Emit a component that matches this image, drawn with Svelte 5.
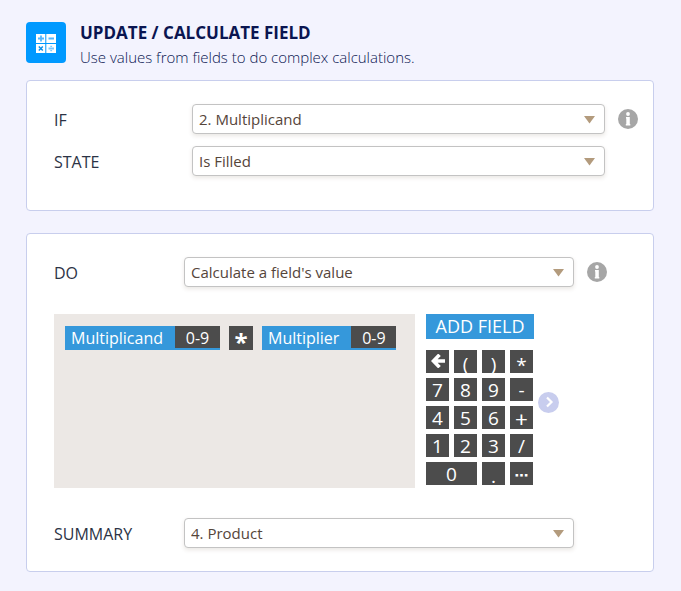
<script>
  let field = $state('2. Multiplicand');
  let condition = $state('Is Filled');
  let action = $state("Calculate a field's value");
  let result = $state('4. Product');

  const keys = ['back', '(', ')', '*', '7', '8', '9', '-', '4', '5', '6', '+', '1', '2', '3', '/', '0', '.', '⋯'];
  const low = ['(', ')', '.'];
</script>

{#snippet caret()}
  <svg class="caret" viewBox="0 0 11 8" aria-hidden="true"><path d="M0 0H11L5.500 7.500Z" /></svg>
{/snippet}

{#snippet info()}
  <button class="info" type="button" aria-label="More information">
    <svg viewBox="0 0 20 20" aria-hidden="true">
      <circle cx="10" cy="10" r="10" fill="#a6a6a6" />
      <circle cx="10" cy="5" r="1.900" fill="#fff" />
      <path d="M8 8h3.800v7H12.300v1.600H7.800V15H8.300V9.500H8z" fill="#fff" />
    </svg>
  </button>
{/snippet}

<main>
  <header>
    <div class="logo">
      <svg viewBox="0 0 20 20" aria-hidden="true">
        <path d="M0 1H9.300V10H0ZM10.300 1H20V10H10.300ZM0 11H9.300V20H0ZM10.300 11H20V20H10.300Z" fill="#fff" />
        <path d="M2 5.500H8M5 2.500V8.500M12.500 5.500H18" stroke="#55b8ff" stroke-width="1.800" />
        <path d="M12.500 15.500H18M15.200 12.700V14M15.200 17V18.300" stroke="#7cc9ff" stroke-width="1.800" />
        <path d="M2.800 13.500L6.800 17.500M6.800 13.500L2.800 17.500" stroke="#0b8fe8" stroke-width="1.500" />
      </svg>
    </div>
    <div>
      <h1>UPDATE / CALCULATE FIELD</h1>
      <p>Use values from fields to do complex calculations.</p>
    </div>
  </header>

  <section class="card when">
    <div class="row">
      <label for="field">IF</label>
      <div class="select">
        <select id="field" bind:value={field}><option>2. Multiplicand</option></select>
        {@render caret()}
      </div>
      {@render info()}
    </div>
    <div class="row">
      <label for="condition">STATE</label>
      <div class="select">
        <select id="condition" bind:value={condition}><option>Is Filled</option></select>
        {@render caret()}
      </div>
    </div>
  </section>

  <section class="card then">
    <div class="row">
      <label for="action">DO</label>
      <div class="select">
        <select id="action" bind:value={action}><option>Calculate a field's value</option></select>
        {@render caret()}
      </div>
      {@render info()}
    </div>

    <div class="builder">
      <div class="formula">
        <span class="token">Multiplicand<span class="type">0-9</span></span>
        <span class="operator">*</span>
        <span class="token">Multiplier<span class="type">0-9</span></span>
      </div>
      <div class="pad">
        <button class="add" type="button">ADD FIELD</button>
        <div class="keys">
          {#each keys as key}
            <button class="key" class:wide={key === '0'} class:low={low.includes(key)} class:star={key === '*'} class:plus={key === '+'} class:more={key === '⋯'} type="button" aria-label={key === 'back' ? 'Backspace' : undefined}>
              {#if key === 'back'}
                <svg viewBox="0 0 14 14" aria-hidden="true"><path d="M8.500 0.800L2.500 7L8.500 13.200M3 7H14" fill="none" stroke="#fff" stroke-width="3.600" /></svg>
              {:else}{key}{/if}
            </button>
          {/each}
        </div>
      </div>
      <button class="next" type="button" aria-label="Show more functions">
        <svg viewBox="0 0 21 21" aria-hidden="true">
          <circle cx="10.500" cy="10.500" r="10.500" fill="#c8cdee" />
          <path d="M9 5.500L13.500 10L9 14.500" fill="none" stroke="#fff" stroke-width="2.200" />
        </svg>
      </button>
    </div>

    <div class="row">
      <label for="result">SUMMARY</label>
      <div class="select">
        <select id="result" bind:value={result}><option>4. Product</option></select>
        {@render caret()}
      </div>
    </div>
  </section>
</main>

<style>
  :global(body) {
    margin: 0;
    background: #f3f3fe;
  }
  main {
    box-sizing: border-box;
    min-height: 100vh;
    padding: 20px 27px 19px 26px;
    background: #f3f3fe;
    color: #2c3345;
    font-family: "Segoe UI", "Open Sans", "Noto Sans", sans-serif;
    font-size: 15px;
  }
  button {
    border: 0;
    padding: 0;
    font-family: inherit;
    cursor: pointer;
  }
  svg {
    display: block;
  }
  header {
    display: flex;
    gap: 14px;
    height: 60px;
    color: #0a1551;
  }
  .logo {
    display: grid;
    place-items: center;
    width: 40px;
    height: 41px;
    margin-top: 2px;
    border-radius: 4px;
    background: #0099ff;
  }
  .logo svg {
    width: 20px;
    height: 20px;
  }
  h1 {
    margin: 0;
    font-size: 17px;
    line-height: 25px;
    font-weight: 700;
  }
  p {
    margin: 0;
    line-height: 25px;
    font-weight: 350;
  }
  .card {
    border: 1px solid #c8ceed;
    border-radius: 4px;
    background: #fff;
  }
  .when {
    padding: 23px 15px 34px 27px;
    margin-bottom: 22px;
  }
  .then {
    padding: 23px 46px 23px 27px;
  }
  .row {
    display: grid;
    grid-template-columns: 130px 1fr 20px;
    align-items: center;
  }
  .when .row {
    grid-template-columns: 138px 1fr 20px;
  }
  .when .row + .row {
    margin-top: 12px;
  }
  label {
    padding-top: 2px;
    font-size: 16px;
    line-height: 24px;
  }
  .select {
    position: relative;
    margin-right: 13px;
  }
  select {
    display: block;
    box-sizing: border-box;
    width: 100%;
    height: 30px;
    padding: 0 30px 0 6px;
    border: 1px solid #c3c3c3;
    border-radius: 4px;
    background: #fff;
    box-shadow: 0 2px 4px rgba(80, 60, 30, 0.12);
    color: #55453a;
    font: inherit;
    appearance: none;
  }
  .caret {
    position: absolute;
    top: 12px;
    right: 10px;
    width: 11px;
    height: 8px;
    fill: #b39b7d;
    pointer-events: none;
  }
  .info {
    width: 20px;
    height: 20px;
    background: none;
  }
  .builder {
    display: flex;
    margin: 27px 48px 30px 0;
  }
  .formula {
    display: flex;
    flex: 1;
    flex-wrap: wrap;
    align-content: flex-start;
    gap: 9px;
    box-sizing: border-box;
    min-height: 174px;
    padding: 12px 11px;
    background: #ece8e5;
  }
  .token,
  .operator {
    display: flex;
    height: 24px;
    background: #3598db;
    color: #fff;
    font-size: 16px;
    line-height: 24px;
  }
  .token {
    padding-left: 6px;
  }
  .type {
    width: 45px;
    height: 22px;
    margin-left: 12px;
    background: #4c4c4c;
    text-align: center;
  }
  .operator {
    justify-content: center;
    width: 24px;
    background: #4c4c4c;
    font-size: 24px;
    font-weight: 700;
    line-height: 32px;
  }
  .pad {
    width: 108px;
    margin-left: 11px;
  }
  .add {
    width: 100%;
    height: 25px;
    background: #3598db;
    color: #fff;
    font-size: 18px;
    line-height: 25px;
  }
  .keys {
    display: grid;
    grid-template-columns: repeat(4, 23px);
    grid-auto-rows: 23px;
    gap: 5px;
    margin-top: 11px;
  }
  .key {
    display: flex;
    justify-content: center;
    background: #4c4c4c;
    color: #fff;
    font-size: 19px;
    line-height: 25px;
  }
  .key svg {
    width: 14px;
    height: 14px;
    margin-top: 4px;
  }
  .low {
    line-height: 28px;
  }
  .star {
    line-height: 30px;
  }
  .plus {
    font-size: 22px;
    line-height: 26px;
    font-family: "Lato", sans-serif;
  }
  .more {
    font-family: "DejaVu Sans", sans-serif;
    font-size: 14px;
    font-weight: 700;
    line-height: 26px;
  }
  .wide {
    grid-column: span 2;
  }
  .next {
    align-self: flex-start;
    width: 21px;
    height: 21px;
    margin: 78px 0 0 4px;
    background: none;
  }
</style>
